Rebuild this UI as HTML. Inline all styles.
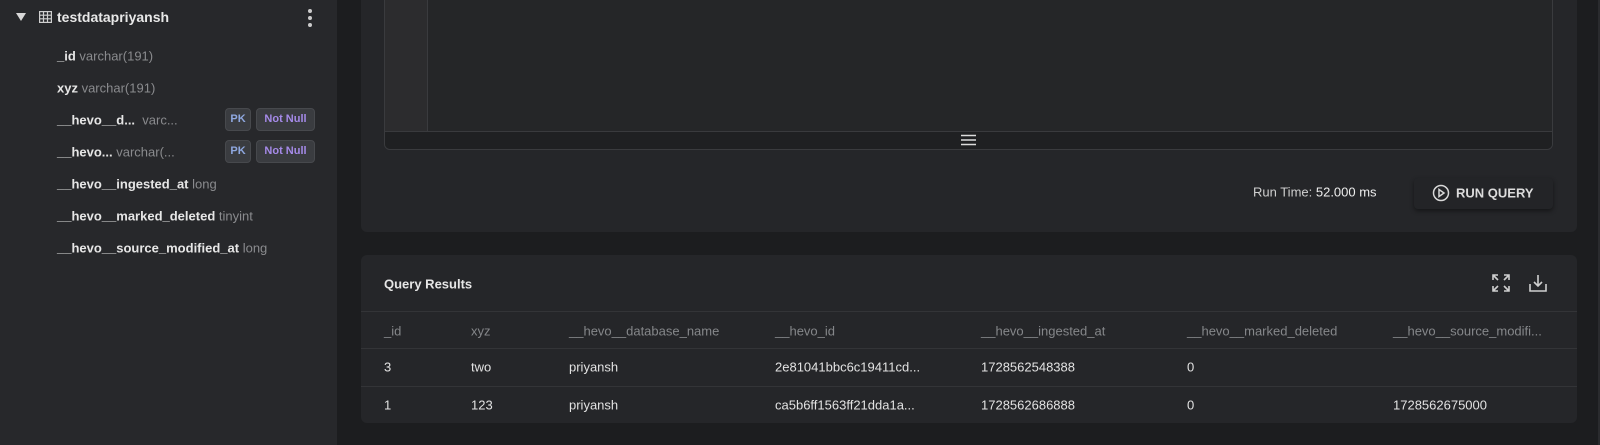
<!DOCTYPE html>
<html><head><meta charset="utf-8"><style>
*{margin:0;padding:0;box-sizing:border-box}
body{width:1600px;height:445px;background:#1c1d1f;font-family:"Liberation Sans",sans-serif;position:relative;overflow:hidden;color:#e2e2e2}
.abs{position:absolute}
#side{left:0;top:0;width:337px;height:445px;background:#27282b}
.f{position:absolute;left:57px;font-size:13px;font-weight:bold;color:#e6e6e6;transform:translateY(-50%);white-space:nowrap}
.f span{font-weight:normal;color:#8a8b8e}
.b{position:absolute;height:23px;border-radius:4px;background:#3a3c40;border:1px solid #47494d;font-size:11px;font-weight:bold;line-height:21px;text-align:center}
.t{position:absolute;font-size:13px;transform:translateY(-50%);white-space:nowrap}
.h{color:#85878a}
.line{position:absolute;left:361px;width:1216px;height:1px;background:#333437}
</style></head><body>
<div id="side" class="abs"></div>
<svg class="abs" style="left:15px;top:12px" width="12" height="10"><path d="M1 1H11L6 9Z" fill="#d8d8d8"/></svg>
<svg class="abs" style="left:39px;top:11px" width="13" height="12" fill="none" stroke="#cfcfcf" stroke-width="1.2"><rect x="0.6" y="0.6" width="11.8" height="10.8"/><path d="M0.6 4.2H12.4M0.6 7.8H12.4M4.5 0.6V11.4M8.5 0.6V11.4"/></svg>
<div class="f" style="top:17px;left:57px;font-size:14px;font-weight:bold;color:#e8e8e8">testdatapriyansh</div>
<svg class="abs" style="left:307px;top:8px" width="6" height="20"><circle cx="3" cy="3" r="2" fill="#ccc"/><circle cx="3" cy="10" r="2" fill="#ccc"/><circle cx="3" cy="17" r="2" fill="#ccc"/></svg>
<div class="f" style="top:56px">_id <span>varchar(191)</span></div>
<div class="f" style="top:88px">xyz <span>varchar(191)</span></div>
<div class="f" style="top:120px">__hevo__d... &nbsp;<span>varc...</span></div>
<div class="f" style="top:152px">__hevo... <span>varchar(...</span></div>
<div class="f" style="top:184px">__hevo__ingested_at <span>long</span></div>
<div class="f" style="top:216px">__hevo__marked_deleted <span>tinyint</span></div>
<div class="f" style="top:248px">__hevo__source_modified_at <span>long</span></div>
<div class="b" style="left:225px;top:108px;width:26px;color:#8fa8e0">PK</div>
<div class="b" style="left:256px;top:108px;width:59px;color:#a58ae8">Not Null</div>
<div class="b" style="left:225px;top:140px;width:26px;color:#8fa8e0">PK</div>
<div class="b" style="left:256px;top:140px;width:59px;color:#a58ae8">Not Null</div>

<div class="abs" style="left:1598px;top:0;width:2px;height:445px;background:#2a2b2e"></div>

<!-- top panel -->
<div class="abs" style="left:361px;top:-6px;width:1216px;height:238px;background:#252629;border-radius:6px"></div>
<div class="abs" style="left:384px;top:-2px;width:1169px;height:152px;background:#252628;border:1px solid #3a3b3e;border-radius:0 0 6px 6px;overflow:hidden">
 <div class="abs" style="left:0;top:0;width:43px;height:133px;background:#2c2c2e;border-right:1px solid #3a3b3e"></div>
 <div class="abs" style="left:0;top:132px;width:100%;height:19px;background:#1f2022;border-top:1px solid #393a3d"></div>
</div>
<svg class="abs" style="left:961px;top:134px" width="15" height="12"><path d="M0 1.5H15M0 6H15M0 10.5H15" stroke="#dcdcdc" stroke-width="1.6"/></svg>
<div class="t" style="left:1253px;top:192px;color:#cfcfcf">Run Time: <span style="color:#eee">52.000 ms</span></div>
<div class="abs" style="left:1414px;top:178px;width:139px;height:31px;background:#232427;border-radius:4px;box-shadow:0 2px 5px rgba(0,0,0,.45)"></div>
<svg class="abs" style="left:1432px;top:184px" width="18" height="18" fill="none" stroke="#d8d8d8" stroke-width="1.5"><circle cx="9" cy="9" r="7.5"/><path d="M7 5.5L12 9L7 12.5Z"/></svg>
<div class="t" style="left:1456px;top:193px;font-weight:bold;color:#dcdcdc">RUN QUERY</div>

<!-- results -->
<div class="abs" style="left:361px;top:255px;width:1216px;height:168px;background:#252629;border-radius:6px"></div>
<div class="t" style="left:384px;top:284px;font-weight:bold;color:#e6e6e6">Query Results</div>
<svg class="abs" style="left:1492px;top:274px" width="18" height="18" fill="none" stroke="#cfcfcf" stroke-width="1.6"><path d="M1 6V1H6M1 1L6 6M12 1H17V6M17 1L12 6M1 12V17H6M1 17L6 12M17 12V17H12M17 17L12 12"/></svg>
<svg class="abs" style="left:1529px;top:274px" width="18" height="18" fill="none" stroke="#cfcfcf" stroke-width="1.6"><path d="M1 10V17H17V10M9 1V12M5 8L9 12L13 8"/></svg>
<div class="line" style="top:311px"></div>
<div class="line" style="top:348px"></div>
<div class="line" style="top:386px"></div>
<div class="t h" style="left:384px;top:331px">_id</div>
<div class="t h" style="left:471px;top:331px">xyz</div>
<div class="t h" style="left:569px;top:331px">__hevo__database_name</div>
<div class="t h" style="left:775px;top:331px">__hevo_id</div>
<div class="t h" style="left:981px;top:331px">__hevo__ingested_at</div>
<div class="t h" style="left:1187px;top:331px">__hevo__marked_deleted</div>
<div class="t h" style="left:1393px;top:331px">__hevo__source_modifi...</div>
<div class="t" style="left:384px;top:367px">3</div>
<div class="t" style="left:471px;top:367px">two</div>
<div class="t" style="left:569px;top:367px">priyansh</div>
<div class="t" style="left:775px;top:367px">2e81041bbc6c19411cd...</div>
<div class="t" style="left:981px;top:367px">1728562548388</div>
<div class="t" style="left:1187px;top:367px">0</div>
<div class="t" style="left:384px;top:405px">1</div>
<div class="t" style="left:471px;top:405px">123</div>
<div class="t" style="left:569px;top:405px">priyansh</div>
<div class="t" style="left:775px;top:405px">ca5b6ff1563ff21dda1a...</div>
<div class="t" style="left:981px;top:405px">1728562686888</div>
<div class="t" style="left:1187px;top:405px">0</div>
<div class="t" style="left:1393px;top:405px">1728562675000</div>
</body></html>
